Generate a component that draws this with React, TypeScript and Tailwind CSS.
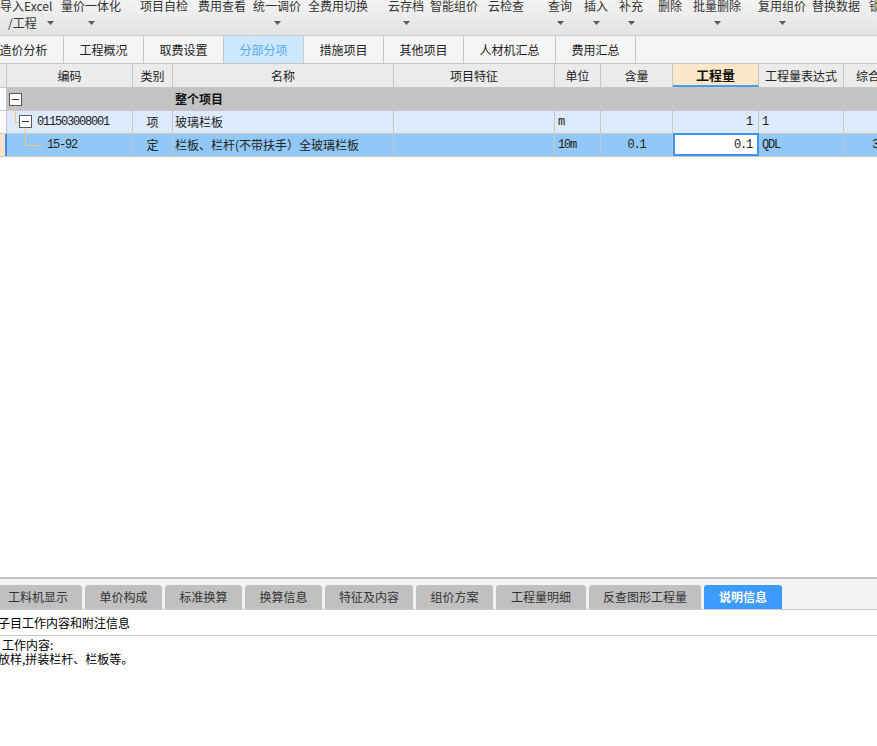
import React from "react";

const COLS =
  "grid grid-cols-[7px_126px_40px_221px_161px_46px_72px_86px_85px_60px]";
const CELL = "border-r border-[#c6c6c6] overflow-hidden whitespace-nowrap";
const MONO = "font-['Liberation_Mono',monospace] text-[12px] tracking-[-1.2px]";

function Arrow() {
  return (
    <svg width="7" height="4" viewBox="0 0 7 4">
      <path d="M0 0h7L3.5 4z" fill="#5a5a5a" />
    </svg>
  );
}

const tools: { t: string; c: string; a?: boolean }[] = [
  { t: "量价一体化", c: "ml-[5px] w-[60px]", a: true },
  { t: "项目自检", c: "ml-[19px] w-[48px]" },
  { t: "费用查看", c: "ml-[10px] w-[48px]" },
  { t: "统一调价", c: "ml-[7px] w-[48px]", a: true },
  { t: "全费用切换", c: "ml-[7px] w-[60px]" },
  { t: "云存档", c: "ml-[20px] w-[36px]", a: true },
  { t: "智能组价", c: "ml-[6px] w-[48px]" },
  { t: "云检查", c: "ml-[10px] w-[36px]" },
  { t: "查询", c: "ml-[24px] w-[24px]", a: true },
  { t: "插入", c: "ml-[12px] w-[24px]", a: true },
  { t: "补充", c: "ml-[11px] w-[24px]", a: true },
  { t: "删除", c: "ml-[15px] w-[24px]" },
  { t: "批量删除", c: "ml-[11px] w-[48px]", a: true },
  { t: "复用组价", c: "ml-[17px] w-[48px]", a: true },
  { t: "替换数据", c: "ml-[6px] w-[48px]" },
  { t: "锁定", c: "ml-[9px] w-[24px]" },
];

const topTabs: { t: string; c: string }[] = [
  { t: "造价分析", c: "w-[80px]" },
  { t: "工程概况", c: "w-[80px]" },
  { t: "取费设置", c: "w-[80px]" },
  { t: "分部分项", c: "w-[80px] bg-[#cce8ff] text-[#5fa6ee]" },
  { t: "措施项目", c: "w-[80px]" },
  { t: "其他项目", c: "w-[80px]" },
  { t: "人材机汇总", c: "w-[92px]" },
  { t: "费用汇总", c: "w-[80px]" },
];

const bottomTabs: { t: string; c: string }[] = [
  { t: "工料机显示", c: "w-[88px]" },
  { t: "单价构成", c: "w-[77px]" },
  { t: "标准换算", c: "w-[77px]" },
  { t: "换算信息", c: "w-[77px]" },
  { t: "特征及内容", c: "w-[88px]" },
  { t: "组价方案", c: "w-[77px]" },
  { t: "工程量明细", c: "w-[90px]" },
  { t: "反查图形工程量", c: "w-[112px]" },
  { t: "说明信息", c: "w-[78px] bg-[#3d9bfd] text-white font-bold" },
];

const TREE = "#f5c68c";

function MinusBox({ x, y }: { x: number; y: number }) {
  return (
    <g>
      <rect x={x + 0.5} y={y + 0.5} width={12} height={12} fill="#fff" stroke="#5a5a5a" />
      <line x1={x + 3} y1={y + 6.5} x2={x + 10} y2={y + 6.5} stroke="#333" />
    </g>
  );
}

export default function App() {
  return (
    <div className="w-[877px] h-[746px] overflow-hidden bg-white flex flex-col font-['Noto_Sans_CJK_SC',sans-serif] text-[12px] text-[#222]">
      {/* Toolbar */}
      <div className="h-[36px] shrink-0 bg-gradient-to-b from-[#f4f4f4] to-[#e3e3e3] border-b border-[#cfcfcf] overflow-hidden">
        <div className="flex -mt-[3px] leading-[17px] text-[#333] whitespace-nowrap">
          <div className="w-[56px] shrink-0 flex flex-col">
            <div>导入Excel</div>
            <div className="flex items-center h-[17px] pl-[8px]">
              <span>/工程</span>
              <span className="ml-[10px] flex">
                <Arrow />
              </span>
            </div>
          </div>
          {tools.map((it) => (
            <div key={it.t} className={"shrink-0 flex flex-col items-center " + it.c}>
              <div>{it.t}</div>
              <div className="h-[17px] flex items-center justify-center">
                {it.a ? <Arrow /> : null}
              </div>
            </div>
          ))}
        </div>
      </div>

      {/* Top tabs */}
      <div className="h-[28px] shrink-0 bg-[#f5f5f5] border-b border-[#c6c6c6] flex overflow-hidden">
        <div className="flex -ml-[16px] h-full">
          {topTabs.map((t) => (
            <div
              key={t.t}
              className={
                "h-full shrink-0 border-r border-[#c8c8c8] flex items-center justify-center pt-[1px] " +
                t.c
              }
            >
              {t.t}
            </div>
          ))}
        </div>
      </div>

      {/* Grid */}
      <div className="flex-1 overflow-hidden bg-white">
        {/* header */}
        <div className={COLS + " h-[24px] bg-[#ebebeb] border-b border-[#c6c6c6] w-[904px]"}>
          <div className={CELL}></div>
          <div className={CELL + " flex items-center justify-center"}>编码</div>
          <div className={CELL + " flex items-center justify-center"}>类别</div>
          <div className={CELL + " flex items-center justify-center"}>名称</div>
          <div className={CELL + " flex items-center justify-center"}>项目特征</div>
          <div className={CELL + " flex items-center justify-center"}>单位</div>
          <div className={CELL + " flex items-center justify-center"}>含量</div>
          <div className={CELL + " flex items-center justify-center bg-[#fde7c9] border-b-2 border-b-[#4a9af0] text-[13px] font-bold text-[#111]"}>
            工程量
          </div>
          <div className={CELL + " flex items-center justify-center"}>工程量表达式</div>
          <div className={CELL + " flex items-center pl-[12px]"}>综合单价</div>
        </div>

        {/* row 1 */}
        <div className={COLS + " h-[23px] border-b border-[#c6c6c6] w-[904px]"}>
          <div className={CELL + " bg-white"}></div>
          <div className={CELL + " bg-[#c3c3c3] relative"}>
            <svg className="absolute left-0 top-0" width="126" height="23">
              <line x1="8.5" y1="18" x2="8.5" y2="23" stroke={TREE} />
              <MinusBox x={2} y={5} />
            </svg>
          </div>
          <div className={CELL + " bg-[#c3c3c3]"}></div>
          <div className={CELL + " bg-[#c3c3c3] flex items-center pl-[2px] font-bold text-[#111]"}>整个项目</div>
          <div className={CELL + " bg-[#c3c3c3]"}></div>
          <div className={CELL + " bg-[#c3c3c3]"}></div>
          <div className={CELL + " bg-[#c3c3c3]"}></div>
          <div className={CELL + " bg-[#c3c3c3]"}></div>
          <div className={CELL + " bg-[#c3c3c3]"}></div>
          <div className={CELL + " bg-[#c3c3c3]"}></div>
        </div>

        {/* row 2 */}
        <div className={COLS + " h-[23px] border-b border-[#c6c6c6] w-[904px] bg-[#dde9fc]"}>
          <div className={CELL + " bg-white"}></div>
          <div className={CELL + " relative flex items-center"}>
            <svg className="absolute left-0 top-0" width="126" height="23">
              <line x1="8.5" y1="0" x2="8.5" y2="11.5" stroke={TREE} />
              <line x1="8.5" y1="11.5" x2="12" y2="11.5" stroke={TREE} />
              <line x1="18.5" y1="17" x2="18.5" y2="23" stroke={TREE} />
              <MinusBox x={12} y={4} />
            </svg>
            <span className={"relative pl-[30px] " + MONO}>011503008001</span>
          </div>
          <div className={CELL + " flex items-center justify-center"}>项</div>
          <div className={CELL + " flex items-center pl-[2px]"}>玻璃栏板</div>
          <div className={CELL}></div>
          <div className={CELL + " flex items-center pl-[3px] " + MONO}>m</div>
          <div className={CELL}></div>
          <div className={CELL + " flex items-center justify-end pr-[6px] " + MONO}>1</div>
          <div className={CELL + " flex items-center pl-[3px] " + MONO}>1</div>
          <div className={CELL}></div>
        </div>

        {/* row 3 */}
        <div className={COLS + " h-[23px] border-b border-[#c6c6c6] w-[904px] bg-[#92c8f7]"}>
          <div className="flex">
            <div className="w-[5px] bg-[#fde4c8]"></div>
            <div className="w-[2px] bg-[#3d8fe8]"></div>
          </div>
          <div className={CELL + " relative flex items-center"}>
            <svg className="absolute left-0 top-0" width="126" height="23">
              <line x1="18.5" y1="0" x2="18.5" y2="11.5" stroke={TREE} />
              <line x1="18.5" y1="11.5" x2="35" y2="11.5" stroke={TREE} />
            </svg>
            <span className={"relative pl-[40px] " + MONO}>15-92</span>
          </div>
          <div className={CELL + " flex items-center justify-center"}>定</div>
          <div className={CELL + " flex items-center pl-[2px]"}>栏板、栏杆(不带扶手）全玻璃栏板</div>
          <div className={CELL}></div>
          <div className={CELL + " flex items-center pl-[3px] " + MONO}>10m</div>
          <div className={CELL + " flex items-center justify-center " + MONO}>0.1</div>
          <div className="bg-white border-2 border-[#3d94f6] -mt-[1px] h-[23px] flex items-center justify-end pr-[5px] overflow-hidden">
            <span className={MONO}>0.1</span>
          </div>
          <div className={CELL + " flex items-center pl-[3px] " + MONO}>QDL</div>
          <div className={CELL + " flex items-center pl-[28px] " + MONO}>338.43</div>
        </div>
      </div>

      {/* Bottom panel */}
      <div className="h-[169px] shrink-0 flex flex-col border-t-2 border-[#c4c4c4]">
        <div className="h-[31px] shrink-0 bg-[#f3f3f3] border-b border-[#c8c8c8] flex items-end overflow-hidden">
          <div className="flex -ml-[6px] gap-[3px]">
            {bottomTabs.map((t) => (
              <div
                key={t.t}
                className={
                  "h-[24px] shrink-0 rounded-t-[3px] flex items-center justify-center text-[#333] " +
                  (t.t === "说明信息" ? "" : "bg-[#c0c0c0] ") +
                  t.c
                }
              >
                {t.t}
              </div>
            ))}
          </div>
        </div>
        <div className="h-[26px] shrink-0 border-b border-[#c8c8c8] flex items-center -ml-[2px] text-black whitespace-nowrap">
          子目工作内容和附注信息
        </div>
        <div className="pt-[2px] leading-[14px] text-black whitespace-nowrap">
          <div className="pl-[2px]">工作内容:</div>
          <div className="-ml-[2px]">放样,拼装栏杆、栏板等。</div>
        </div>
      </div>
    </div>
  );
}
